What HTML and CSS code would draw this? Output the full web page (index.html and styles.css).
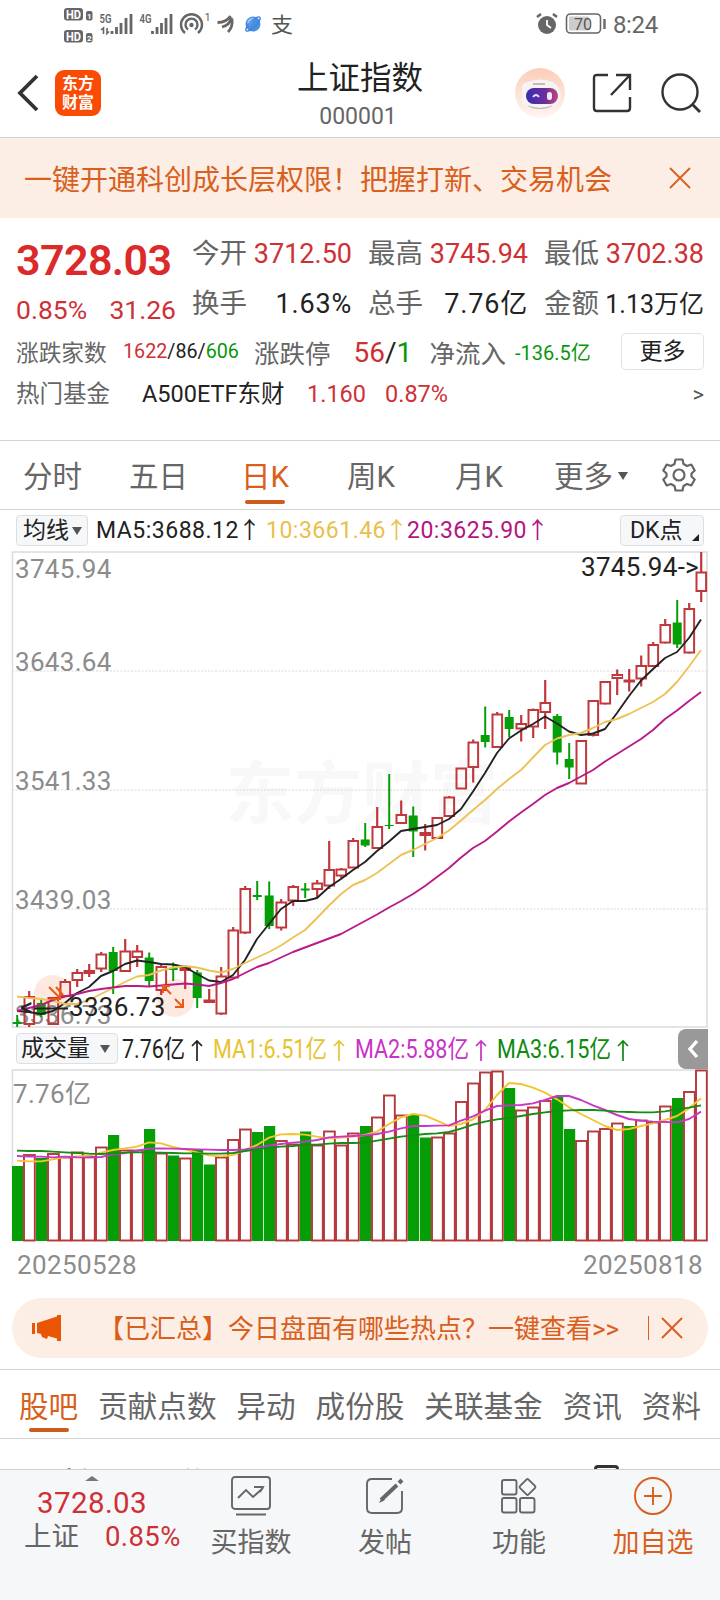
FILE: index.html
```html
<!DOCTYPE html>
<html lang="zh-CN">
<head>
    <meta charset="UTF-8">
    <meta name="viewport" content="width=device-width, initial-scale=1.0">
    <title>上证指数 000001</title>
    <link rel="stylesheet" href="styles.css">
</head>
<body>
    <div class="status-bar">
        <svg width="300" height="48" viewBox="0 0 300 48">
            <g fill="#666">
                <rect x="64" y="8" width="19" height="12.500" rx="3"/>
                <rect x="64" y="30" width="19" height="12.500" rx="3"/>
                <rect x="86" y="11" width="6.500" height="9.500" rx="2"/>
                <rect x="86" y="33" width="6.500" height="9.500" rx="2"/>
            </g>
            <g fill="#fff" font-size="12" font-weight="700">
                <text x="66" y="18.500" textLength="15" lengthAdjust="spacingAndGlyphs">HD</text>
                <text x="66" y="40.500" textLength="15" lengthAdjust="spacingAndGlyphs">HD</text>
                <text x="87" y="18.500" font-size="8">1</text>
                <text x="87" y="40.500" font-size="8">2</text>
            </g>
            <g fill="#666" font-size="12.500" font-weight="600">
                <text x="99.500" y="23" textLength="12" lengthAdjust="spacingAndGlyphs">5G</text>
                <text x="139.500" y="23" textLength="12" lengthAdjust="spacingAndGlyphs">4G</text>
                <text x="204.500" y="21" font-size="11" font-weight="400">1</text>
            </g>
            <g stroke="#666" stroke-width="2.800">
                <path d="M112 34v-3M116.500 34v-7M121 34V23M126 34V18M131 34V14"/>
                <path d="M152.500 34v-3M157 34v-7M161.500 34V23M166 34V18M171 34V14"/>
            </g>
            <path d="M103.500 34v-6l-2.500 2M107 28v5.500l2-2" fill="none" stroke="#666" stroke-width="1.600"/>
            <g fill="none" stroke="#666" stroke-width="2.400">
                <path d="M185 33a10.500 10.500 0 1 1 13 0"/>
                <path d="M188 29.500a6 6 0 1 1 7 0"/>
            </g>
            <circle cx="191.500" cy="25" r="2.200" fill="#666"/>
            <g fill="none" stroke="#666" stroke-width="2.800">
                <path d="M217.500 22.500q9 0 13-6.500"/>
                <path d="M222 27q8-2 9.500-9.500"/>
                <path d="M228 32q5-5 4-13"/>
            </g>
            <circle cx="253" cy="24" r="7.500" fill="#4a90e2"/>
            <path d="M247 22a7 7 0 0 1 8-4l-6 8z" fill="#8cc2f5"/>
            <ellipse cx="253" cy="24" rx="9.500" ry="3" fill="none" stroke="#3f83d8" stroke-width="1.300" transform="rotate(-45 253 24)"/>
            <text x="271" y="31.500" font-size="21" fill="#555" textLength="22" lengthAdjust="spacingAndGlyphs">支</text>
        </svg>
        <div class="status-right">
            <svg width="72" height="26" viewBox="0 0 72 26">
                <circle cx="12" cy="14" r="9" fill="#666"/>
                <path d="M12 9v5l4 3" fill="none" stroke="#fff" stroke-width="1.800"/>
                <path d="M2 6l4-3M18 3l4 3" stroke="#666" stroke-width="2.600"/>
                <rect x="31.500" y="3" width="34" height="19" rx="4" fill="#fff" stroke="#666" stroke-width="1.600"/>
                <rect x="34" y="5.500" width="20" height="14" rx="1" fill="#ccc"/>
                <text x="39" y="18.500" font-size="16" fill="#555">70</text>
                <path d="M69.500 8v10" stroke="#666" stroke-width="2.400"/>
            </svg>
            <span class="clock">8:24</span>
        </div>
    </div>

    <div class="header">
        <div class="header-left">
            <svg width="22" height="38" viewBox="0 0 22 38"><path d="M20 2L3 19l17 17" fill="none" stroke="#333" stroke-width="3.800"/></svg>
            <div class="logo">东方<br>财富</div>
        </div>
        <div class="header-title">
            <h1>上证指数</h1>
            <span>000001</span>
        </div>
        <div class="header-right">
            <svg width="50" height="50" viewBox="0 0 50 50">
                <defs>
                    <linearGradient id="skin" x1="0" y1="0" x2="0" y2="1">
                        <stop offset="0" stop-color="#fbcdb8"/>
                        <stop offset="1" stop-color="#fff6f1"/>
                    </linearGradient>
                    <linearGradient id="visor">
                        <stop offset="0" stop-color="#3a2bb0"/>
                        <stop offset=".6" stop-color="#6b2f9c"/>
                        <stop offset="1" stop-color="#c04878"/>
                    </linearGradient>
                </defs>
                <circle cx="25" cy="25" r="25" fill="url(#skin)"/>
                <path d="M7 18q2-4 6-4 12-5 25 0 7 4 8 14-2 11-12 12-10 3-22-1-6-3-5-10z" fill="#f6f3f4"/>
                <path d="M12 37q13 6 26 0-4 4-13 4t-13-4z" fill="#b9b2bd"/>
                <path d="M18 16h12" stroke="#c9b9b6" stroke-width="2"/>
                <rect x="11" y="20" width="32" height="16" rx="8" fill="url(#visor)"/>
                <path d="M18 29q3-4 6 0" fill="none" stroke="#dfe6ff" stroke-width="1.800"/>
                <rect x="32" y="24" width="5" height="8" rx="2.500" fill="#f5e6fa"/>
            </svg>
            <svg width="40" height="40" viewBox="0 0 40 40"><path d="M16 2H5Q2 2 2 5v30q0 3 3 3h30q3 0 3-3V24M24 2h14v15M38 2L19 22" fill="none" stroke="#333" stroke-width="2.400"/></svg>
            <svg width="40" height="40" viewBox="0 0 40 40"><circle cx="19" cy="19" r="17.500" fill="none" stroke="#333" stroke-width="2.400"/><path d="M31 31l8 8" stroke="#333" stroke-width="2.800"/></svg>
        </div>
    </div>

    <div class="banner">
        <span>一键开通科创成长层权限！把握打新、交易机会</span>
        <svg width="22" height="22" viewBox="0 0 22 22"><path d="M1 1l20 20M21 1L1 21" stroke="#d95f1c" stroke-width="1.800"/></svg>
    </div>

    <div class="quote">
        <div class="quote-top">
            <div class="price-box">
                <div class="price">3728.03</div>
                <div class="change"><span>0.85%</span><span>31.26</span></div>
            </div>
            <div class="stats">
                <div class="stat"><label>今开</label><b class="red">3712.50</b></div>
                <div class="stat"><label>最高</label><b class="red">3745.94</b></div>
                <div class="stat"><label>最低</label><b class="red">3702.38</b></div>
                <div class="stat"><label>换手</label><b class="wide">1.63%</b></div>
                <div class="stat"><label>总手</label><b class="wide">7.76亿</b></div>
                <div class="stat"><label>金额</label><b class="small">1.13万亿</b></div>
            </div>
        </div>
        <div class="breadth">
            <label class="l1">涨跌家数</label>
            <span class="v1"><i class="red">1622</i>/86/<i class="green">606</i></span>
            <label class="l2">涨跌停</label>
            <span class="v2"><i class="red">56</i>/<i class="green">1</i></span>
            <label class="l2">净流入</label>
            <span class="v3 green">-136.5亿</span>
            <button class="more-btn">更多</button>
        </div>
        <div class="fund">
            <label>热门基金</label>
            <span class="fund-name">A500ETF东财</span>
            <span class="fund-price red">1.160</span>
            <span class="red">0.87%</span>
            <span class="arrow">&gt;</span>
        </div>
    </div>

    <div class="period-tabs">
        <span>分时</span>
        <span>五日</span>
        <span class="active">日K</span>
        <span>周K</span>
        <span>月K</span>
        <span>更多<em class="tri"></em></span>
        <svg width="34" height="34" viewBox="0 0 34 34">
            <path d="M13.500 1.500h7l1 4.500 3.500 2 4.300-1.500 3.400 6-3.200 3v3l3.200 3-3.400 6L25 26l-3.500 2-1 4.500h-7l-1-4.500L9 26l-4.300 1.500-3.400-6 3.200-3v-3l-3.200-3 3.400-6L9 8l3.500-2z" fill="none" stroke="#666" stroke-width="2.200" stroke-linejoin="round"/>
            <circle cx="17" cy="17" r="5.500" fill="none" stroke="#666" stroke-width="2.200"/>
        </svg>
    </div>

    <div class="ma-legend">
        <span class="chip">均线<em class="tri"></em></span>
        <span class="ma5">MA5:3688.12<u>↑</u></span>
        <span class="ma10">10:3661.46<u>↑</u></span>
        <span class="ma20">20:3625.90<u>↑</u></span>
        <span class="chip dk">DK点<em class="corner"></em></span>
    </div>

    <svg id="kline" class="chart" width="720" height="477" viewBox="0 551 720 477">
        <g class="watermark"><text x="226" y="818">东方财富</text></g>
        <path class="grid" d="M12 671H707M12 790H707M12 909H707"/>
        <rect class="frame" x="12.500" y="552" width="694.500" height="475"/>
        <g fill="#fde9df">
            <circle cx="53" cy="994" r="19"/>
            <circle cx="175" cy="998" r="19"/>
        </g>
        <g class="axis">
            <text x="15" y="578">3745.94</text>
            <text x="15" y="671">3643.64</text>
            <text x="15" y="790">3541.33</text>
            <text x="15" y="909">3439.03</text>
            <text x="15" y="1024">3336.73</text>
        </g>
        <g id="candles"></g>
        <g class="mark">
            <path d="M49 987l10 10M50 999h10V988M56 987l7 8"/>
            <path d="M171 994l-8-8M163 993v-7h7M175 999l8 8M183 999v8h-8"/>
        </g>
        <g class="peak">
            <text x="581" y="576">3745.94-&gt;</text>
            <text x="20" y="1016">&lt;</text>
            <path d="M34 1008.500h34" stroke="#222" stroke-width="2"/>
            <text x="69" y="1016">3336.73</text>
        </g>
    </svg>

    <div class="vol-legend">
        <span class="chip">成交量<em class="tri"></em></span>
        <svg width="520" height="41" viewBox="120 1028 520 41">
            <g fill="#222"><text x="122" y="1058" textLength="63" lengthAdjust="spacingAndGlyphs">7.76亿</text><path d="M197 1061v-20M192 1046l5-5 5 5"/></g>
            <g fill="#e8c32e"><text x="213" y="1058" textLength="114" lengthAdjust="spacingAndGlyphs">MA1:6.51亿</text><path d="M339 1061v-20M334 1046l5-5 5 5" stroke="#e8c32e"/></g>
            <g fill="#c832c8"><text x="355" y="1058" textLength="114" lengthAdjust="spacingAndGlyphs">MA2:5.88亿</text><path d="M481 1061v-20M476 1046l5-5 5 5" stroke="#c832c8"/></g>
            <g fill="#0e8a0e"><text x="497" y="1058" textLength="114" lengthAdjust="spacingAndGlyphs">MA3:6.15亿</text><path d="M623 1061v-20M618 1046l5-5 5 5" stroke="#0e8a0e"/></g>
        </svg>
        <button class="toggle"><svg width="12" height="20" viewBox="0 0 12 20"><path d="M10 2L3 10l7 8" fill="none" stroke="#fff" stroke-width="3.400"/></svg></button>
    </div>

    <svg id="volume" class="chart" width="720" height="173" viewBox="0 1069 720 173">
        <path class="frame" d="M12.500 1241V1070H707V1241"/>
        <g id="bars"></g>
        <g class="axis"><text x="13" y="1103">7.76亿</text></g>
    </svg>
    <div class="dates"><span>20250528</span><span>20250818</span></div>

    <div class="notice">
        <svg width="32" height="28" viewBox="0 0 32 28"><path d="M1 9h3v11H1zM6 9l20-6.500V1h4v26h-4v-2.500l-9-2.500-1 3-5-2-1-3-4-1z" fill="#ea5504"/></svg>
        <span class="notice-text">【已汇总】今日盘面有哪些热点？一键查看&gt;&gt;</span>
        <em class="divider"></em>
        <svg width="22" height="22" viewBox="0 0 22 22"><path d="M1 1l20 20M21 1L1 21" stroke="#d95f1c" stroke-width="2"/></svg>
    </div>

    <div class="info-tabs">
        <span class="active">股吧</span>
        <span>贡献点数</span>
        <span>异动</span>
        <span>成份股</span>
        <span>关联基金</span>
        <span>资讯</span>
        <span>资料</span>
    </div>

    <div class="posts">
        <b>最新</b>
        <span>最热</span>
        <em></em>
    </div>

    <div class="bottom-bar">
        <div class="mini">
            <em class="tri-up"></em>
            <div class="mini-price">3728.03</div>
            <div class="mini-row"><label>上证</label><span>0.85%</span></div>
        </div>
        <div class="nav-item">
            <svg width="42" height="42" viewBox="0 0 42 42" fill="none" stroke="#666" stroke-width="1.900"><rect x="2" y="2" width="38" height="32" rx="3"/><path d="M8 23l8-8 7 7 10-9M24 12l9 0-3 5M6 39.500h30"/></svg>
            <span>买指数</span>
        </div>
        <div class="nav-item">
            <svg width="42" height="42" viewBox="0 0 42 42" fill="none" stroke="#666" stroke-width="1.900"><path d="M28 4H8Q3 4 3 9v24q0 5 5 5h25q5 0 5-5V16"/><path d="M17 25L33 10" stroke-width="4"/><path d="M35 8l3-3" stroke-width="4"/><path d="M18 22l-3 6 6-3z" fill="#666" stroke="none"/></svg>
            <span>发帖</span>
        </div>
        <div class="nav-item">
            <svg width="42" height="42" viewBox="0 0 42 42" fill="none" stroke="#666" stroke-width="1.900"><rect x="4" y="5" width="14.500" height="14.500" rx="2"/><rect x="4" y="23" width="14.500" height="14.500" rx="2"/><rect x="22" y="23" width="14.500" height="14.500" rx="2"/><rect x="23.500" y="6" width="12" height="12" rx="1.500" transform="rotate(45 29.500 12)"/></svg>
            <span>功能</span>
        </div>
        <div class="nav-item add">
            <svg width="42" height="42" viewBox="0 0 42 42" fill="none" stroke="#d95f1c" stroke-width="1.900"><circle cx="21" cy="21" r="18"/><path d="M12 21h18M21 12v18"/></svg>
            <span>加自选</span>
        </div>
    </div>

    <script src="chart.js"></script>
</body>
</html>
```
FILE: styles.css
```css
* {
    box-sizing: border-box;
}
body {
    margin: 0;
    width: 720px;
    height: 1600px;
    overflow: hidden;
    background: #fff;
    color: #222;
    font-family: Roboto, "Noto Sans CJK SC", sans-serif;
    white-space: nowrap;
}
svg {
    display: block;
    flex-shrink: 0;
}
b, i, em, u {
    font-weight: 400;
    font-style: normal;
    text-decoration: none;
}
button {
    font-family: inherit;
    padding: 0;
}
.red {
    color: #cf3036;
}
.green {
    color: #0a960a;
}
.tri {
    display: inline-block;
    border: 5px solid transparent;
    border-top: 8px solid #555;
    border-bottom: 0;
}

/* status bar */
.status-bar {
    display: flex;
    justify-content: space-between;
    height: 48px;
}
.status-right {
    display: flex;
    align-items: center;
    gap: 6px;
    padding-right: 62px;
}
.clock {
    font-size: 24px;
    color: #666;
    line-height: 48px;
    padding-top: 2px;
    letter-spacing: -0.3px;
}

/* header */
.header {
    display: grid;
    grid-template-columns: 240px 1fr 240px;
    align-items: center;
    height: 90px;
    border-bottom: 1px solid #d4d4d4;
}
.header-left {
    display: flex;
    align-items: center;
    gap: 16px;
    padding-left: 17px;
}
.logo {
    width: 46px;
    height: 46px;
    padding-top: 4px;
    border-radius: 9px;
    background: #fa4b05;
    color: #fff;
    font-size: 16px;
    font-weight: 700;
    line-height: 19px;
    text-align: center;
}
.header-title {
    text-align: center;
    padding-top: 8px;
}
.header-title h1 {
    margin: 0;
    font-size: 31.5px;
    font-weight: 400;
    line-height: 39px;
}
.header-title span {
    display: block;
    font-size: 23px;
    line-height: 37px;
    color: #666;
    margin-right: 4px;
}
.header-right {
    display: flex;
    align-items: center;
    justify-content: flex-end;
    padding-right: 19px;
}
.header-right svg:nth-child(2) {
    margin: 0 29px 0 27px;
}

.banner {
    display: flex;
    align-items: center;
    justify-content: space-between;
    height: 80px;
    padding: 0 29px 0 24px;
    background: #fcede5;
    color: #d95f1c;
    font-size: 28px;
}

/* quote */
.quote {
    height: 223px;
    border-bottom: 1px solid #d4d4d4;
    padding: 9px 16px 0 16px;
}
.quote label {
    color: #666;
}
.quote-top {
    display: flex;
    height: 101px;
}
.price-box {
    width: 176px;
    color: #cf3036;
}
.price {
    font-size: 43px;
    font-weight: 600;
    line-height: 67px;
    color: #dc2a2a;
    letter-spacing: -0.6px;
}
.change {
    display: flex;
    justify-content: space-between;
    width: 160px;
    font-size: 26.5px;
    line-height: 32px;
}
.stats {
    flex: 1;
    display: grid;
    grid-template-columns: 160px 160px 160px;
    column-gap: 16px;
    grid-template-rows: 50px 50px;
    padding-top: 1px;
}
.stat {
    display: flex;
    justify-content: space-between;
    align-items: baseline;
    font-size: 27px;
    line-height: 51px;
}
.stat label {
    font-size: 27.5px;
}
.stat b.wide {
    letter-spacing: 0.8px;
}
.stat b.small {
    font-size: 25px;
}
.breadth {
    display: flex;
    align-items: center;
    height: 47px;
}
.l1 {
    font-size: 22.7px;
    width: 107px;
}
.l2 {
    font-size: 25.5px;
}
.v1 {
    font-size: 19.7px;
    width: 131px;
}
.v2 {
    font-size: 28px;
    width: 76px;
    margin-left: 23px;
    padding-top: 2px;
}
.v3 {
    font-size: 20px;
    margin-left: 9px;
}
.more-btn {
    margin-left: auto;
    width: 83px;
    height: 37px;
    border: 1.5px solid #e2e2e2;
    border-radius: 5px;
    background: #fff;
    color: #222;
    font-size: 23px;
    line-height: 32px;
}
.fund {
    display: flex;
    align-items: baseline;
    font-size: 23.5px;
    line-height: 39px;
}
.fund-name {
    margin-left: 32px;
    width: 165px;
}
.fund-price {
    width: 78px;
}
.arrow {
    margin-left: auto;
    font-size: 22px;
    color: #555;
}

/* period tabs */
.period-tabs {
    display: grid;
    grid-template-columns: 106px 112px 106px 108px 99px 108px auto;
    align-items: center;
    height: 69px;
    padding-left: 23px;
    border-bottom: 1px solid #d4d4d4;
    font-size: 29.5px;
    color: #666;
}
.period-tabs span {
    line-height: 68px;
    height: 68px;
    padding-top: 2px;
}
.period-tabs .tri {
    margin: 0 0 7px 5px;
}
.active {
    position: relative;
}
.active::after {
    content: "";
    position: absolute;
    left: 4px;
    bottom: 5px;
    width: 40px;
    height: 4px;
    border-radius: 2px;
    background: #cc5c1c;
}
.period-tabs .active, .info-tabs .active {
    color: #d95f1c;
}

/* legends */
.ma-legend, .vol-legend {
    display: flex;
    align-items: center;
    height: 41px;
    padding-left: 16px;
}
.ma-legend {
    font-size: 23px;
    line-height: 32px;
    letter-spacing: 0.5px;
}
.ma5, .ma10, .ma20 {
    height: 31px;
}
.ma-legend u {
    display: inline-block;
    width: 23px;
    margin-left: -1px;
}
.chip {
    display: flex;
    align-items: center;
    height: 31px;
    width: 72px;
    padding-left: 6px;
    border: 1px solid #dcdfe2;
    border-radius: 4px;
    background: #f5f7f9;
    font-size: 23px;
    line-height: 28px;
    letter-spacing: 0;
}
.chip .tri {
    margin: 1px 0 0 3px;
}
.ma5 {
    margin-left: 8px;
    width: 170px;
}
.ma10 {
    width: 141px;
    color: #e9bf4e;
}
.ma20 {
    color: #b41482;
}
.dk {
    position: relative;
    width: 84px;
    padding-left: 9px;
    margin: 0 16px 0 auto;
}
.corner {
    position: absolute;
    right: 4px;
    bottom: 4px;
    border-left: 7px solid transparent;
    border-bottom: 7px solid #222;
}
.vol-legend .chip {
    width: 102px;
    padding-left: 4px;
    margin-right: 2px;
}
.vol-legend .tri {
    margin-left: 10px;
}
.vol-legend text {
    font-size: 25px;
}
.vol-legend path {
    fill: none;
    stroke-width: 1.7;
}
.vol-legend g:first-child path {
    stroke: #222;
}
.toggle {
    display: flex;
    align-items: center;
    justify-content: center;
    width: 30px;
    height: 40px;
    margin-left: 38px;
    border: 0;
    border-radius: 8px 0 0 8px;
    background: #999;
}
.toggle path {
    stroke-width: 3.4;
}

/* charts */
.frame {
    fill: none;
    stroke: #dcdcdc;
    stroke-width: 1.5;
}
.grid {
    stroke: #d8d8d8;
    stroke-dasharray: 2 1.5;
}
.axis text {
    font-size: 26px;
    fill: #8c8c8c;
    letter-spacing: 0.3px;
}
.peak text {
    font-size: 26px;
    fill: #222;
    letter-spacing: 0.3px;
}
.watermark text {
    font-size: 68px;
    font-weight: 700;
    fill: #f8f8f8;
}
.mark path {
    fill: none;
    stroke: #ee5a12;
    stroke-width: 2;
}

.dates {
    display: flex;
    justify-content: space-between;
    height: 56px;
    padding: 0 17px;
    font-size: 26px;
    line-height: 47px;
    letter-spacing: 0.4px;
    color: #8c8c8c;
}

.notice {
    display: flex;
    align-items: center;
    height: 60px;
    margin: 0 12px 11px;
    padding: 0 25px 0 19px;
    border-radius: 30px;
    background: #fcede5;
    color: #d95f1c;
    font-size: 26px;
}
.notice-text {
    margin-left: 35px;
    padding-bottom: 3px;
}
.divider {
    width: 1.5px;
    height: 24px;
    margin: 0 12px 0 auto;
    background: #d95f1c;
}

.info-tabs {
    display: flex;
    justify-content: space-between;
    height: 70px;
    padding: 3px 19px 0;
    border-top: 1px solid #d4d4d4;
    border-bottom: 1px solid #d4d4d4;
    font-size: 29.6px;
    line-height: 68px;
    color: #666;
}
.info-tabs .active::after {
    left: 10px;
    bottom: 6px;
}

/* list header, cut off by the bottom bar */
.posts {
    display: flex;
    height: 30px;
    padding: 24px 0 0 35px;
    overflow: hidden;
    font-size: 27px;
    line-height: 40px;
}
.posts b {
    font-weight: 700;
    width: 119px;
}
.posts span {
    color: #555;
}
.posts em {
    width: 25px;
    height: 25px;
    margin: 2px 0 0 386px;
    border: 3px solid #333;
    border-radius: 4px;
}

.bottom-bar {
    display: flex;
    height: 131px;
    border-top: 1px solid #cfcfcf;
    background: #f6f7f9;
}
.mini {
    width: 184px;
    color: #cf3036;
}
.tri-up {
    display: block;
    width: 0;
    margin: 6px 0 0 85px;
    border: 7px solid transparent;
    border-bottom: 5px solid #777;
    border-top: 0;
}
.mini-price {
    margin-left: 37px;
    font-size: 29.5px;
    line-height: 45px;
    letter-spacing: 0.4px;
}
.mini-row {
    display: flex;
    gap: 26px;
    padding-left: 24px;
    font-size: 27.5px;
    line-height: 22px;
}
.mini-row span {
    letter-spacing: 0.4px;
}
.mini-row label {
    color: #666;
}
.nav-item {
    width: 134px;
    display: flex;
    flex-direction: column;
    align-items: center;
    padding-top: 5px;
    font-size: 27px;
    line-height: 52px;
    color: #666;
}
.add {
    color: #d95f1c;
}
```
FILE: chart.js
```js
// candle: [up, high, top, bottom, low]
const candles = [
    [0, 1015, 1022, 1024, 1027], [1, 991, 997, 1024, 1027], [0, 998, 1003, 1015, 1017], [1, 997, 998, 1024, 1024],
    [1, 979, 982, 996, 997], [1, 969, 973, 980, 987], [1, 964, 971, 973, 977], [1, 952, 954.5, 968.5, 972],
    [0, 947, 952, 971, 994], [1, 939, 951.5, 971, 971], [1, 945, 951.5, 957, 967], [0, 952.5, 957.5, 981, 987],
    [1, 965, 967, 990, 995], [0, 962.5, 968, 970, 981], [1, 965, 968, 970, 989], [0, 970, 972.5, 998, 1008],
    [1, 989, 1000.5, 1002, 1003], [1, 967, 976.5, 1013.5, 1015], [1, 927, 930.5, 977.5, 978], [1, 886, 889, 932.5, 934],
    [0, 881, 895, 897, 900], [0, 881.5, 895.5, 926, 929], [1, 899, 902.5, 927.5, 930.5], [1, 885, 887, 900.5, 906],
    [0, 883, 888.5, 890.5, 898], [1, 880, 883.5, 889, 898], [1, 841, 870, 885.5, 889], [1, 868, 869.5, 875.5, 878],
    [1, 838, 841, 867.5, 868], [0, 823, 839.5, 845.5, 847], [1, 807, 827, 848, 848.5], [0, 774, 825, 826, 829],
    [1, 800.5, 815, 823, 823], [0, 806.5, 815.5, 831.5, 857], [1, 824, 833, 835, 850.5], [1, 817, 818, 838, 838],
    [1, 796, 797.5, 816, 817], [1, 768, 768.5, 788.5, 789], [1, 739.5, 742.5, 767, 782.5], [0, 706.5, 735, 742, 747.5],
    [1, 712, 714.5, 747, 748], [0, 710, 717, 729, 737], [1, 715, 724, 728.5, 741.5], [1, 708.5, 710, 726.5, 738],
    [1, 680, 703, 712, 729], [0, 714, 716, 752.5, 764.5], [0, 743, 759, 767.5, 779], [1, 740, 741, 783.5, 784],
    [1, 700, 701, 735, 736.5], [1, 681, 682, 703.5, 704.5], [1, 669.5, 675, 678, 695], [1, 669, 680.5, 681.5, 691.5],
    [1, 655.5, 666, 678.5, 686.5], [1, 642, 645, 666, 667], [1, 619, 625, 642.5, 643.5], [0, 600, 622.5, 644.5, 648],
    [1, 603, 609, 652.5, 653.5], [1, 552, 572.5, 591, 602]
];

const priceMA = {
    '#222222': [1011, 1012, 1014, 1011, 1003, 993, 987, 976, 971, 964, 960.5, 962, 964, 964.5, 967, 974, 980.5, 982, 975, 960, 939, 924, 909, 901, 901, 898, 887, 879, 870, 862, 851, 841.5, 831, 829, 827, 825, 819, 809, 791.5, 773, 753, 738.5, 730.5, 724, 716.5, 723.5, 731.5, 735, 733.5, 729, 713, 696, 680.5, 669, 658, 652, 638, 619.5],
    '#edc255': [996.5, 998, 999, 1001, 1004, 1004, 1000, 994, 988, 982, 976.5, 975, 970.5, 967.5, 966, 967.5, 970.5, 972.5, 969, 963, 957.5, 952, 945.5, 937.5, 930, 918, 905.5, 894, 885, 880, 873, 864, 855, 850, 844, 838, 830.5, 820.5, 810, 800, 789, 779, 770, 757.5, 745, 738.5, 735, 733, 728, 722, 719, 714, 708, 702, 694, 682, 666.5, 650],
    '#b91a87': [1011, 1008, 1005, 1000, 996.5, 994, 991, 989, 987.5, 986, 986, 986.5, 985.5, 984.5, 983.5, 984.5, 986, 983, 979, 973, 967, 963, 957.5, 952, 947.5, 943, 938.5, 934, 927.5, 921, 914.5, 907.5, 901, 894, 886, 877, 868, 857.5, 848, 841, 831.5, 821.5, 812.5, 804, 795, 788, 783, 776.5, 770, 761.5, 754, 746.5, 739, 730, 719, 710.5, 701, 692]
};

// top edge of each volume bar, same order as the candles
const volumes = [
    1166, 1154.5, 1158, 1153.5, 1157, 1152, 1156.5, 1147, 1135, 1150, 1150, 1129, 1153, 1155.5, 1158, 1150, 1164.5, 1157, 1139.5, 1129,
    1132, 1126, 1140.5, 1144, 1131.5, 1145, 1131, 1145, 1133, 1126, 1117, 1095, 1115, 1115, 1137.5, 1137, 1133, 1101.5, 1083, 1072,
    1071, 1088, 1110, 1107, 1100.5, 1096, 1129, 1140.5, 1131, 1128.5, 1123, 1126, 1120, 1122, 1106, 1098, 1091.5, 1070
];
const downVolumes = [0, 2, 8, 11, 13, 15, 16, 20, 21, 24, 29, 33, 34, 41, 45, 46, 51, 55];

// distance from the top of the legend, in thirds of a pixel
const volumeMA = {
    '#f2c530': [422, 424, 424, 418, 411, 409, 407, 398, 390, 385, 380, 367, 370, 381, 388, 397, 406, 409, 405, 390, 375, 353, 343, 342, 344, 350, 355, 353, 350, 345, 335, 312, 292, 282, 287, 302, 318, 312, 298, 270, 225, 189, 192, 203, 218, 238, 262, 282, 300, 318, 330, 327, 318, 310, 300, 288, 265, 235],
    '#c837c8': [408, 410, 410, 412, 410, 412, 413, 411, 403, 399, 392, 386, 385, 386, 387, 388, 389, 390, 390, 388, 383, 377, 372, 368, 365, 360, 352, 350, 348, 346, 342, 335, 325, 318, 318, 317, 316, 302, 289, 272, 258, 256, 255, 250, 240, 228, 228, 240, 256, 270, 285, 297, 302, 305, 306, 307, 297, 275],
    '#158c15': [392, 393, 393, 395, 397, 399, 401, 402, 400, 398, 397, 397, 398, 399, 400, 400, 401, 401, 399, 393, 388, 383, 380, 378, 374, 374, 371, 369, 369, 368, 362, 356, 350, 346, 342, 340, 336, 326, 314, 305, 298, 294, 288, 282, 277, 273, 271, 270, 270, 272, 275, 276, 277, 277, 274, 268, 263, 256]
};

const RED = '#c0383c';
const GREEN = '#069e06';
const x = i => 17 + i * 12;

function lines(series, toY) {
    return Object.entries(series).map(([color, values]) =>
        `<polyline points="${values.map((v, i) => x(i) + ',' + toY(v)).join(' ')}" fill="none" stroke="${color}" stroke-width="1.9" stroke-linejoin="round"/>`
    ).join('');
}

document.getElementById('candles').innerHTML = candles.map(([up, high, top, bottom, low], i) => {
    const c = x(i) + 0.2;
    if (!up) {
        return `<path d="M${c} ${high}V${low}" stroke="${GREEN}" stroke-width="2"/>
            <rect x="${c - 4.5}" y="${top}" width="9" height="${bottom - top}" fill="${GREEN}"/>`;
    }
    return `<path d="M${c} ${high}V${top}M${c} ${bottom}V${low}" stroke="${RED}" stroke-width="2.2"/>
        <rect x="${c - 4.7}" y="${top}" width="9.6" height="${bottom - top}" fill="none" stroke="${RED}" stroke-width="2"/>`;
}).join('') + lines(priceMA, v => v);

document.getElementById('bars').innerHTML = volumes.map((top, i) => {
    const c = x(i);
    if (downVolumes.includes(i)) {
        return `<rect x="${c - 5}" y="${top}" width="11.2" height="${1241 - top}" fill="${GREEN}"/>`;
    }
    return `<rect x="${c - 5}" y="${top + 0.5}" width="10.8" height="${1240 - top}" fill="#fff" stroke="#b5383d" stroke-width="1.9"/>`;
}).join('') + lines(volumeMA, v => 1020 + v / 3);
```
